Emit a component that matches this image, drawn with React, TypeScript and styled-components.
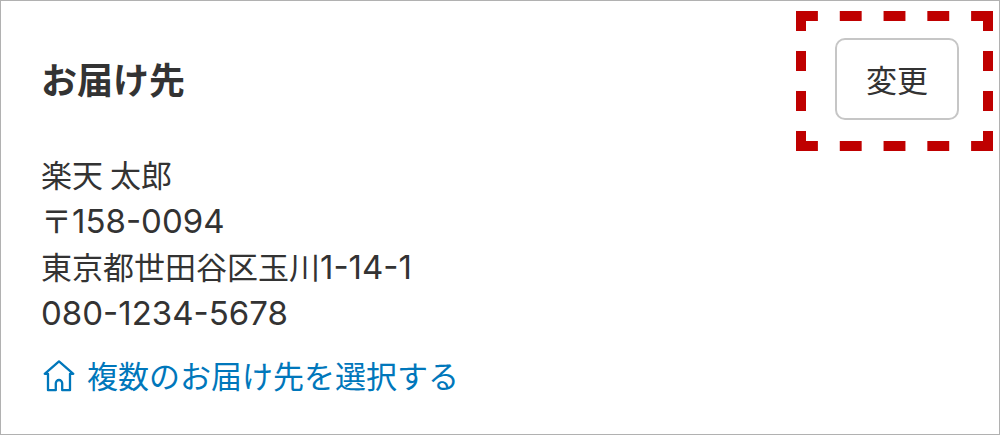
import React from "react";
import styled, { createGlobalStyle } from "styled-components";

const GlobalStyle = createGlobalStyle`
  *, *::before, *::after {
    box-sizing: border-box;
  }
  body {
    margin: 0;
    background: #fff;
    color: #333;
    font-family: "Noto Sans CJK JP", sans-serif;
    font-size: 31px;
    line-height: 46px;
  }
`;

const Card = styled.section`
  min-height: 100vh;
  padding: 37px 40px 28px;
  border: 1px solid #b1b1b1;
`;

const Header = styled.header`
  display: flex;
  align-items: center;
  justify-content: space-between;
`;

const Title = styled.h2`
  margin: 0;
  padding-bottom: 2px;
  font-size: 36px;
  font-weight: 700;
`;

const Highlight = styled.div`
  position: relative;
`;

const HighlightFrame = styled.svg`
  position: absolute;
  top: -27px;
  left: -39px;
  width: calc(100% + 73px);
  height: calc(100% + 58px);
  pointer-events: none;
  stroke: #bf0000;
  stroke-width: 20px;
  fill: none;
`;

const ChangeButton = styled.button`
  display: block;
  padding: 16px 29px;
  border: 2px solid #c6c6c6;
  border-radius: 10px;
  background: #fff;
  color: inherit;
  font: inherit;
  cursor: pointer;
`;

const Address = styled.address`
  margin-top: 31px;
  font-style: normal;
`;

const Line = styled.div`
  min-height: 46px;
`;

const Digits = styled.span`
  font-family: Inter, sans-serif;
  font-size: 33px;
  line-height: 1;
`;

const MultiLink = styled.a`
  display: inline-flex;
  align-items: center;
  gap: 12px;
  margin-top: 17px;
  padding-left: 2px;
  color: #0077bb;
  text-decoration: none;
`;

const HomeIcon = () => (
  <svg
    width="32"
    height="34"
    viewBox="0 -2 32 34"
    fill="none"
    stroke="currentColor"
    strokeWidth="2.3"
    strokeLinejoin="round"
    aria-hidden="true"
  >
    <path d="M16 1.4 30.3 13.8H27V30.2H19.2V23.2a3.2 3.2 0 0 0-6.4 0V30.2H5V13.8H1.7Z" />
  </svg>
);

const DashedFrame = () => (
  <HighlightFrame aria-hidden="true">
    <line x1="0" y1="0" x2="100%" y2="0" pathLength={9} strokeDasharray="1 1" />
    <line x1="0" y1="100%" x2="100%" y2="100%" pathLength={9} strokeDasharray="1 1" />
    <line x1="0" y1="0" x2="0" y2="100%" pathLength={7} strokeDasharray="1 1" />
    <line x1="100%" y1="0" x2="100%" y2="100%" pathLength={7} strokeDasharray="1 1" />
  </HighlightFrame>
);

export default function App() {
  return (
    <>
      <GlobalStyle />
      <Card lang="ja">
        <Header>
          <Title>お届け先</Title>
          <Highlight>
            <ChangeButton type="button">変更</ChangeButton>
            <DashedFrame />
          </Highlight>
        </Header>
        <Address>
          <Line>楽天 太郎</Line>
          <Line>
            〒<Digits>158-0094</Digits>
          </Line>
          <Line>
            東京都世田谷区玉川<Digits>1-14-1</Digits>
          </Line>
          <Line>
            <Digits>080-1234-5678</Digits>
          </Line>
        </Address>
        <MultiLink href="#addresses">
          <HomeIcon />
          複数のお届け先を選択する
        </MultiLink>
      </Card>
    </>
  );
}
